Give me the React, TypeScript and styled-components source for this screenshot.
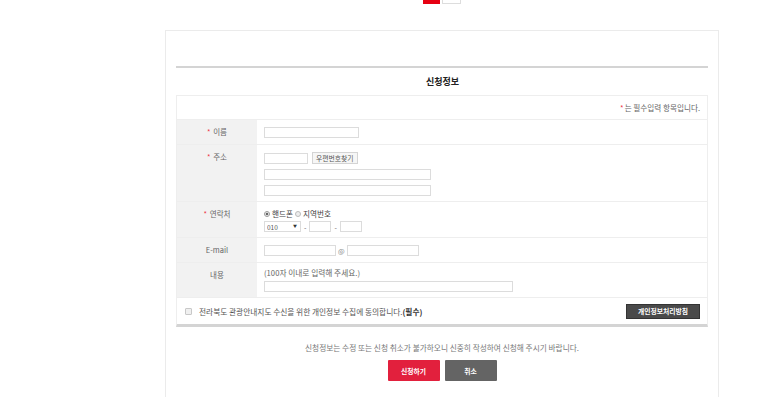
import styled, { createGlobalStyle } from 'styled-components'

const GlobalStyle = createGlobalStyle`
    html, body {
        margin: 0;
        padding: 0;
        background: #fff;
        font-family: "Noto Sans CJK KR", "Noto Sans", sans-serif;
        color: #666;
        overflow: hidden;
    }
    * { box-sizing: border-box; }
`

const App = () => {
    return (
        <>
            <GlobalStyle />
            <Page>
                <Pager>
                    <PageBox $active />
                    <PageBox />
                </Pager>
                <Panel>
                    <TopRule />
                    <Title>신청정보</Title>
                    <FormTable>
                        <Notice><Req>*</Req> 는 필수입력 항목입니다.</Notice>

                        <Row>
                            <Label><Req>*</Req> 이름</Label>
                            <Cell>
                                <Input $w={95} />
                            </Cell>
                        </Row>

                        <Row>
                            <Label><Req>*</Req> 주소</Label>
                            <Cell $gap={5} $bottom={5}>
                                <Line>
                                    <Input $w={44} />
                                    <SmallButton type="button">우편번호찾기</SmallButton>
                                </Line>
                                <Input $w={167} />
                                <Input $w={167} />
                            </Cell>
                        </Row>

                        <Row>
                            <Label><Req>*</Req> 연락처</Label>
                            <Cell $gap={2} $bottom={5}>
                                <Line>
                                    <Radio type="radio" name="tel" defaultChecked />
                                    <RadioText>핸드폰</RadioText>
                                    <Radio type="radio" name="tel" />
                                    <RadioText>지역번호</RadioText>
                                </Line>
                                <Line>
                                    <SelectWrap>
                                        <Select defaultValue="010">
                                            <option>010</option>
                                            <option>011</option>
                                            <option>016</option>
                                        </Select>
                                        <Caret>▼</Caret>
                                    </SelectWrap>
                                    <Dash>-</Dash>
                                    <Input $w={22} />
                                    <Dash>-</Dash>
                                    <Input $w={22} />
                                </Line>
                            </Cell>
                        </Row>

                        <Row>
                            <Label>E-mail</Label>
                            <Cell>
                                <Line>
                                    <Input $w={72} />
                                    <At>@</At>
                                    <Input $w={72} />
                                </Line>
                            </Cell>
                        </Row>

                        <Row>
                            <Label>내용</Label>
                            <Cell $gap={3} $top={5} $bottom={5}>
                                <Hint>(100자 이내로 입력해 주세요.)</Hint>
                                <Input $w={249} />
                            </Cell>
                        </Row>

                        <AgreeRow>
                            <Agree>
                                <Check type="checkbox" />
                                전라북도 관광안내지도 수신을 위한 개인정보 수집에 동의합니다.<strong>(필수)</strong>
                            </Agree>
                            <PolicyButton type="button">개인정보처리방침</PolicyButton>
                        </AgreeRow>
                    </FormTable>

                    <Message>신청정보는 수정 또는 신청 취소가 불가하오니 신중히 작성하여 신청해 주시기 바랍니다.</Message>
                    <Actions>
                        <ActionButton type="button" $tone="red">신청하기</ActionButton>
                        <ActionButton type="button" $tone="gray">취소</ActionButton>
                    </Actions>
                </Panel>
            </Page>
        </>
    )
}

export default App

const Page = styled.div`
    width: 773px;
    height: 397px;
    overflow: hidden;
`;

const Pager = styled.div`
    height: 4px;
    overflow: hidden;
    display: flex;
    justify-content: center;
    align-items: flex-end;
    gap: 2px;
    padding-left: 111px;
`;

const PageBox = styled.span<{ $active?: boolean }>`
    width: ${p => (p.$active ? 17 : 19)}px;
    height: 18px;
    flex: none;
    background: ${p => (p.$active ? '#e60012' : '#fff')};
    border: 1px solid ${p => (p.$active ? '#e60012' : '#ddd')};
`;

const Panel = styled.div`
    margin: 26px 0 0 165px;
    width: 554px;
    min-height: 400px;
    border: 1px solid #ebebeb;
    border-bottom: none;
    padding: 35px 10px 0;
`;

const TopRule = styled.div`
    height: 2px;
    background: #d4d4d4;
`;

const Title = styled.h2`
    margin: 0;
    height: 27px;
    display: flex;
    align-items: center;
    justify-content: center;
    font-size: 9px;
    font-weight: 700;
    color: #222;
    padding-left: 1px;
`;

const FormTable = styled.div`
    border: 1px solid #eee;
    border-bottom: 3px solid #d4d4d4;
`;

const Notice = styled.div`
    height: 24px;
    padding-right: 7px;
    display: flex;
    align-items: center;
    justify-content: flex-end;
    font-size: 7.6px;
    color: #666;
    border-bottom: 1px solid #eee;
`;

const Req = styled.span`
    color: #ee3344;
    margin-right: 1px;
`;

const Row = styled.div`
    display: grid;
    grid-template-columns: 80px 1fr;
    border-bottom: 1px solid #eee;
`;

const Label = styled.div`
    background: #f2f2f2;
    text-align: center;
    font-size: 7.5px;
    line-height: 10px;
    padding-top: 7px;
    color: #666;
`;

const Cell = styled.div<{ $gap?: number; $top?: number; $bottom?: number }>`
    padding: ${p => p.$top ?? 7}px 7px ${p => p.$bottom ?? 6}px;
    display: flex;
    flex-direction: column;
    align-items: flex-start;
    gap: ${p => p.$gap ?? 5}px;
    font-size: 7.6px;
`;

const Line = styled.div`
    display: flex;
    align-items: center;
`;

const Input = styled.input<{ $w: number }>`
    width: ${p => p.$w}px;
    height: 11px;
    border: 1px solid #dcdcdc;
    padding: 0 2px;
    font-size: 7px;
    outline: none;
    background: #fff;
`;

const SmallButton = styled.button`
    margin-left: 4px;
    height: 12px;
    padding: 0 3px;
    border: 1px solid #d4d4d4;
    background: #f6f6f6;
    font-family: inherit;
    font-size: 6.8px;
    line-height: 10px;
    color: #555;
`;

const Radio = styled.input`
    appearance: none;
    margin: 0 2px 0 0;
    width: 6px;
    height: 6px;
    border-radius: 50%;
    border: 1px solid #bbb;
    background: #eee;

    &:checked {
        background: radial-gradient(circle, #666 0 1.5px, #fff 1.6px);
        border-color: #999;
    }
`;

const RadioText = styled.span`
    font-size: 7.6px;
    line-height: 10px;
    color: #444;
    margin-right: 2px;
`;

const SelectWrap = styled.div`
    position: relative;
    width: 37px;
    height: 11px;
`;

const Select = styled.select`
    appearance: none;
    width: 100%;
    height: 100%;
    border: 1px solid #dcdcdc;
    background: #fff;
    font-family: inherit;
    font-size: 6.5px;
    padding: 0 2px;
    color: #555;
    outline: none;
`;

const Caret = styled.span`
    position: absolute;
    right: 4px;
    top: 2px;
    font-size: 4px;
    color: #333;
    pointer-events: none;
`;

const Dash = styled.span`
    margin: 0 3px;
    font-size: 7px;
`;

const At = styled.span`
    margin: 0 2px;
    font-size: 7px;
    color: #888;
`;

const Hint = styled.span`
    font-size: 7.7px;
    color: #666;
    line-height: 10px;
`;

const AgreeRow = styled.div`
    height: 26px;
    display: flex;
    align-items: center;
    justify-content: space-between;
    padding: 0 7px;
`;

const Agree = styled.label`
    display: flex;
    align-items: center;
    font-size: 7.7px;
    color: #555;

    strong {
        color: #333;
    }
`;

const Check = styled.input`
    appearance: none;
    width: 7px;
    height: 7px;
    margin: 0 7px 0 1px;
    border: 1px solid #c8c8c8;
    background: #f0f0f0;
    border-radius: 1px;
`;

const PolicyButton = styled.button`
    width: 74px;
    height: 15px;
    border: 1px solid #333;
    background: #4a4a4a;
    color: #fff;
    font-family: inherit;
    font-size: 6.8px;
    font-weight: 700;
    padding: 0;
`;

const Message = styled.p`
    margin: 16px 0 0;
    text-align: center;
    font-size: 7.7px;
    color: #777;
    line-height: 10px;
`;

const Actions = styled.div`
    margin-top: 7px;
    display: flex;
    justify-content: center;
    gap: 5px;
`;

const ActionButton = styled.button<{ $tone: 'red' | 'gray' }>`
    width: 52px;
    height: 21px;
    border: none;
    border-radius: 1px;
    background: ${p => (p.$tone === 'red' ? '#e2203d' : '#646464')};
    color: #fff;
    font-family: inherit;
    font-size: 6.8px;
    font-weight: 700;
    padding: 0;
`;
